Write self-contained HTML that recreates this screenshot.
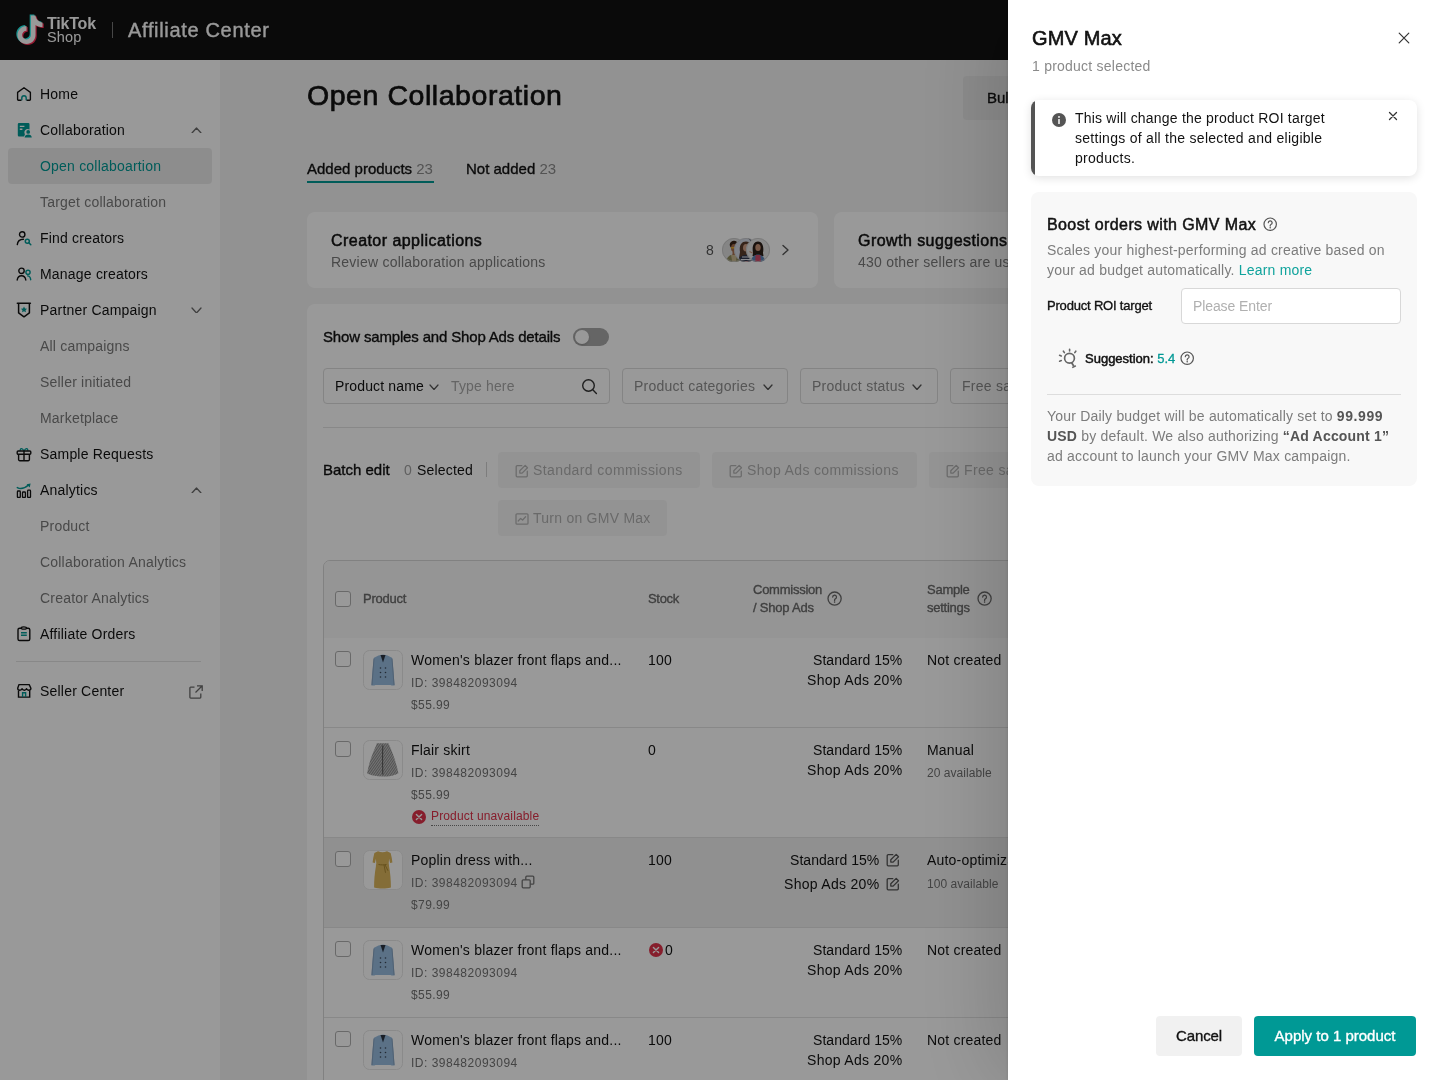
<!DOCTYPE html>
<html><head><meta charset="utf-8">
<style>
*{box-sizing:border-box;margin:0;padding:0}
html,body{width:1440px;height:1080px;overflow:hidden;font-family:"Liberation Sans",sans-serif;color:#121212;background:#f5f5f5;position:relative}
.abs{position:absolute}
.t{position:absolute;white-space:nowrap;will-change:transform}
.sb{-webkit-text-stroke:0.35px currentColor}
svg{display:block}
</style></head>
<body>

<div class="abs" style="left:0px;top:0px;width:1440px;height:60px;background:#121212;"></div>
<svg class="abs" style="left:14.5px;top:13px;" width="32" height="36" viewBox="0 0 32 36" fill="none">
<g transform="translate(1,1)">
<path d="M19.5 1.5 c0.6 4 3 6.5 7 7 v4.6 c-2.6 0 -5 -0.8 -7 -2.2 v10.2 c0 5 -4 9 -9 9 s-9 -4 -9 -9 s4 -9 9 -9 v4.6 c-2.4 0 -4.4 2 -4.4 4.4 s2 4.4 4.4 4.4 s4.4 -2 4.4 -4.4 V1.5z" fill="#25f4ee" transform="translate(-1.2,-1)"/>
<path d="M19.5 1.5 c0.6 4 3 6.5 7 7 v4.6 c-2.6 0 -5 -0.8 -7 -2.2 v10.2 c0 5 -4 9 -9 9 s-9 -4 -9 -9 s4 -9 9 -9 v4.6 c-2.4 0 -4.4 2 -4.4 4.4 s2 4.4 4.4 4.4 s4.4 -2 4.4 -4.4 V1.5z" fill="#fe2c55" transform="translate(1.2,1)"/>
<path d="M19.5 1.5 c0.6 4 3 6.5 7 7 v4.6 c-2.6 0 -5 -0.8 -7 -2.2 v10.2 c0 5 -4 9 -9 9 s-9 -4 -9 -9 s4 -9 9 -9 v4.6 c-2.4 0 -4.4 2 -4.4 4.4 s2 4.4 4.4 4.4 s4.4 -2 4.4 -4.4 V1.5z" fill="#fff"/>
</g></svg>
<div class="t " style="top:15.90px;font-size:16px;line-height:16px;color:#fff;font-weight:700;letter-spacing:-0.2px;left:47px;">TikTok</div>
<div class="t " style="top:30.18px;font-size:14.5px;line-height:14.5px;color:#fff;letter-spacing:0.15px;left:47px;">Shop</div>
<div class="abs" style="left:111.5px;top:22px;width:1.5px;height:16px;background:#777;"></div>
<div class="t sb" style="top:20.00px;font-size:20px;line-height:20px;color:#fff;letter-spacing:0.67px;left:128px;">Affiliate Center</div>
<div class="abs" style="left:0px;top:60px;width:220px;height:1020px;background:#fff;"></div>
<div class="abs" style="left:8px;top:148px;width:204px;height:36px;background:#ececec;border-radius:4px"></div>
<div class="t " style="top:87.10px;font-size:14px;line-height:14px;color:#121212;letter-spacing:0.2px;left:40px;">Home</div>
<div class="t " style="top:123.10px;font-size:14px;line-height:14px;color:#121212;letter-spacing:0.2px;left:40px;">Collaboration</div>
<div class="t " style="top:159.10px;font-size:14px;line-height:14px;color:#009995;letter-spacing:0.2px;left:40px;">Open collaboartion</div>
<div class="t " style="top:195.10px;font-size:14px;line-height:14px;color:#7a7a7a;letter-spacing:0.2px;left:40px;">Target collaboration</div>
<div class="t " style="top:231.10px;font-size:14px;line-height:14px;color:#121212;letter-spacing:0.2px;left:40px;">Find creators</div>
<div class="t " style="top:267.10px;font-size:14px;line-height:14px;color:#121212;letter-spacing:0.2px;left:40px;">Manage creators</div>
<div class="t " style="top:303.10px;font-size:14px;line-height:14px;color:#121212;letter-spacing:0.2px;left:40px;">Partner Campaign</div>
<div class="t " style="top:339.10px;font-size:14px;line-height:14px;color:#7a7a7a;letter-spacing:0.2px;left:40px;">All campaigns</div>
<div class="t " style="top:375.10px;font-size:14px;line-height:14px;color:#7a7a7a;letter-spacing:0.2px;left:40px;">Seller initiated</div>
<div class="t " style="top:411.10px;font-size:14px;line-height:14px;color:#7a7a7a;letter-spacing:0.2px;left:40px;">Marketplace</div>
<div class="t " style="top:447.10px;font-size:14px;line-height:14px;color:#121212;letter-spacing:0.2px;left:40px;">Sample Requests</div>
<div class="t " style="top:483.10px;font-size:14px;line-height:14px;color:#121212;letter-spacing:0.2px;left:40px;">Analytics</div>
<div class="t " style="top:519.10px;font-size:14px;line-height:14px;color:#7a7a7a;letter-spacing:0.2px;left:40px;">Product</div>
<div class="t " style="top:555.10px;font-size:14px;line-height:14px;color:#7a7a7a;letter-spacing:0.2px;left:40px;">Collaboration Analytics</div>
<div class="t " style="top:591.10px;font-size:14px;line-height:14px;color:#7a7a7a;letter-spacing:0.2px;left:40px;">Creator Analytics</div>
<div class="t " style="top:627.10px;font-size:14px;line-height:14px;color:#121212;letter-spacing:0.2px;left:40px;">Affiliate Orders</div>
<div class="t " style="top:684.10px;font-size:14px;line-height:14px;color:#121212;letter-spacing:0.2px;left:40px;">Seller Center</div>
<div class="abs" style="left:16px;top:661px;width:185px;height:1px;background:#e3e3e3;"></div>
<svg class="abs" style="left:16px;top:86px;" width="16" height="16" viewBox="0 0 16 16" fill="none"><path d="M5.5 14.2H2.4a.8.8 0 0 1-.8-.8V6.4L8 1.7l6.4 4.7v7a.8.8 0 0 1-.8.8h-3.1" stroke="#121212" stroke-width="1.35" stroke-linejoin="round"/><path d="M5.8 14.2v-2.3a2.2 2.2 0 0 1 4.4 0v2.3" stroke="#009995" stroke-width="1.4"/></svg>
<svg class="abs" style="left:16px;top:122px;" width="16" height="16" viewBox="0 0 16 16" fill="none"><path d="M3 1h9.3a1.2 1.2 0 0 1 1.2 1.2v5.2a3.6 3.6 0 0 0-4.6 5.3l-.9 1.8H3a1.2 1.2 0 0 1-1.2-1.2V2.2A1.2 1.2 0 0 1 3 1z" fill="#009995"/><path d="M3.8 4.4h4.6M3.8 7.3h2.6" stroke="#fff" stroke-width="1.4"/><circle cx="12.2" cy="9.9" r="1.9" fill="#009995"/><path d="M8.6 15.5c.2-1.9 1.6-3.1 3.6-3.1s3.4 1.2 3.6 3.1z" fill="#009995"/></svg>
<svg class="abs" style="left:16px;top:230px;" width="16" height="16" viewBox="0 0 16 16" fill="none"><circle cx="6.2" cy="4.4" r="2.7" stroke="#121212" stroke-width="1.4"/><path d="M1.3 14.6C1.6 11.3 3.8 9.4 7.4 9.3" stroke="#121212" stroke-width="1.4" stroke-linecap="round"/><circle cx="11.3" cy="11.3" r="2" stroke="#009995" stroke-width="1.5"/><path d="M12.8 12.8l2 2" stroke="#009995" stroke-width="1.5" stroke-linecap="round"/></svg>
<svg class="abs" style="left:16px;top:266px;" width="16" height="16" viewBox="0 0 16 16" fill="none"><circle cx="5.5" cy="4.8" r="2.7" stroke="#121212" stroke-width="1.4"/><path d="M1.2 14c.4-2.7 2-4.2 4.3-4.2s3.9 1.5 4.3 4.2" stroke="#121212" stroke-width="1.4" stroke-linecap="round"/><circle cx="12" cy="6.3" r="2.1" stroke="#009995" stroke-width="1.4"/><path d="M11.6 9.9c1.7.1 2.8 1.4 3.1 3.8" stroke="#009995" stroke-width="1.4" stroke-linecap="round"/></svg>
<svg class="abs" style="left:16px;top:302px;" width="16" height="16" viewBox="0 0 16 16" fill="none"><path d="M1.3 1.3h13.1" stroke="#121212" stroke-width="1.5" stroke-linecap="round"/><path d="M2.6 1.5v9.4L8 14.8l5.4-3.9V1.5" stroke="#121212" stroke-width="1.5" stroke-linejoin="round"/><path d="M8 4.6l1 2 2.1.2-1.6 1.4.5 2.1L8 9.2l-2 1.1.5-2.1L4.9 6.8 7 6.6z" fill="#009995"/></svg>
<svg class="abs" style="left:16px;top:446px;" width="16" height="16" viewBox="0 0 16 16" fill="none"><path d="M8 5C6.5 2 4 1.5 4.2 4.9M8 5c1.5-3 4-3.5 3.8-.1" stroke="#009995" stroke-width="1.3"/><rect x="1.2" y="5" width="13.6" height="3.2" rx="1" stroke="#121212" stroke-width="1.4"/><path d="M2.6 8.2v5.3a1.2 1.2 0 0 0 1.2 1.2h8.4a1.2 1.2 0 0 0 1.2-1.2V8.2M8 5v9.7" stroke="#121212" stroke-width="1.4"/></svg>
<svg class="abs" style="left:16px;top:482px;" width="16" height="16" viewBox="0 0 16 16" fill="none"><rect x="1.4" y="9" width="2.9" height="6.5" rx=".8" stroke="#121212" stroke-width="1.3"/><rect x="6.5" y="10" width="2.9" height="5.5" rx=".8" stroke="#121212" stroke-width="1.3"/><rect x="11.6" y="8.2" width="2.9" height="7.3" rx=".8" stroke="#121212" stroke-width="1.3"/><path d="M1.3 5.6c3.5 2 6.5 1.5 11.2-2.6" stroke="#009995" stroke-width="1.5" stroke-linecap="round"/><path d="M10.6 2.2l4-.8-.9 4z" fill="#009995"/></svg>
<svg class="abs" style="left:16px;top:626px;" width="16" height="16" viewBox="0 0 16 16" fill="none"><rect x="2" y="2.2" width="11.8" height="12.3" rx="1.6" stroke="#121212" stroke-width="1.4"/><ellipse cx="7.9" cy="2" rx="2.6" ry="1.2" fill="#fff" stroke="#121212" stroke-width="1.3"/><path d="M5 6.8h5.8M5 9.2h5.8" stroke="#009995" stroke-width="1.6"/></svg>
<svg class="abs" style="left:16px;top:683px;" width="16" height="16" viewBox="0 0 16 16" fill="none"><path d="M2.5 7.5v6.6h11.2V7.5" stroke="#121212" stroke-width="1.4"/><path d="M3 1.6h10.2l1.7 3.6c0 1.1-1 2-2.2 2-1.1 0-1.9-.7-2.2-1.6-.3.9-1.1 1.6-2.2 1.6s-1.9-.7-2.2-1.6c-.3.9-1.1 1.6-2.2 1.6-1.2 0-2.2-.9-2.2-2z" stroke="#121212" stroke-width="1.4" stroke-linejoin="round"/><path d="M6.6 14.1v-4.3h3v4.3" stroke="#009995" stroke-width="1.4"/></svg>
<svg class="abs" style="left:188px;top:684px;" width="16" height="16" viewBox="0 0 16 16" fill="none"><path d="M12.8 9.5v3.8a.8.8 0 0 1-.8.8H2.7a.8.8 0 0 1-.8-.8V4a.8.8 0 0 1 .8-.8h3.8" stroke="#6a6a6a" stroke-width="1.3"/><path d="M9 1.8h5.2V7M14 2L7.5 8.5" stroke="#6a6a6a" stroke-width="1.3"/></svg>
<svg class="abs" style="left:190.5px;top:126.75px;" width="11" height="6.5" viewBox="0 0 11 6.5" fill="none"><path d="M1 6.0L5.5 1l4.5 5.0" stroke="#6a6a6a" stroke-width="1.3" stroke-linecap="round" stroke-linejoin="round"/></svg>
<svg class="abs" style="left:190.5px;top:306.75px;" width="11" height="6.5" viewBox="0 0 11 6.5" fill="none"><path d="M1 1l4.5 5.0L10 1" stroke="#6a6a6a" stroke-width="1.3" stroke-linecap="round" stroke-linejoin="round"/></svg>
<svg class="abs" style="left:190.5px;top:486.75px;" width="11" height="6.5" viewBox="0 0 11 6.5" fill="none"><path d="M1 6.0L5.5 1l4.5 5.0" stroke="#6a6a6a" stroke-width="1.3" stroke-linecap="round" stroke-linejoin="round"/></svg>
<div class="abs" style="left:220px;top:60px;width:1220px;height:1020px;background:#f4f4f4;"></div>
<div class="t sb" style="top:80.78px;font-size:28.5px;line-height:28.5px;color:#121212;letter-spacing:0.55px;left:307px;-webkit-text-stroke-width:0.7px">Open Collaboration</div>
<div class="abs" style="left:963px;top:76px;width:120px;height:44px;background:#eaeaea;border-radius:4px"></div>
<div class="t sb" style="top:90.25px;font-size:15px;line-height:15px;color:#121212;letter-spacing:0px;left:987px;">Bulk add products</div>
<div class="t sb" style="top:160.55px;font-size:15px;line-height:15px;color:#121212;letter-spacing:0px;left:307px;">Added products <span style="color:#8a8a8a;-webkit-text-stroke:0">23</span></div>
<div class="abs" style="left:307px;top:181px;width:127px;height:2px;background:#009995;"></div>
<div class="t sb" style="top:160.55px;font-size:15px;line-height:15px;color:#121212;letter-spacing:0px;left:466px;">Not added <span style="color:#8a8a8a;-webkit-text-stroke:0">23</span></div>
<div class="abs" style="left:307px;top:212px;width:511px;height:76px;background:#fff;border-radius:8px"></div>
<div class="t sb" style="top:233.40px;font-size:16px;line-height:16px;color:#121212;letter-spacing:0.45px;left:331px;-webkit-text-stroke-width:0.5px">Creator applications</div>
<div class="t " style="top:255.10px;font-size:14px;line-height:14px;color:#7a7a7a;letter-spacing:0.23px;left:331px;">Review collaboration applications</div>
<div class="abs" style="left:834px;top:212px;width:600px;height:76px;background:#fff;border-radius:8px"></div>
<div class="t sb" style="top:233.40px;font-size:16px;line-height:16px;color:#121212;letter-spacing:0.45px;left:858px;-webkit-text-stroke-width:0.5px">Growth suggestions</div>
<div class="t " style="top:255.10px;font-size:14px;line-height:14px;color:#7a7a7a;letter-spacing:0.23px;left:858px;">430 other sellers are using this feature</div>
<div class="abs" style="left:307px;top:304px;width:1200px;height:900px;background:#fff;border-radius:8px"></div>
<div class="t sb" style="top:329.05px;font-size:15px;line-height:15px;color:#121212;letter-spacing:-0.16px;left:323px;">Show samples and Shop Ads details</div>
<div class="abs" style="left:573px;top:328px;width:36px;height:18px;background:#a8a8a8;border-radius:9px"></div>
<div class="abs" style="left:575px;top:330px;width:14px;height:14px;border-radius:7px;background:#fff;box-shadow:0 1px 2px rgba(0,0,0,.15)"></div>
<div class="abs" style="left:323px;top:368px;width:287px;height:36px;background:#fff;border:1px solid #dcdcdc;border-radius:4px;"></div>
<div class="t " style="top:379.10px;font-size:14px;line-height:14px;color:#121212;letter-spacing:0.15px;left:335px;">Product name</div>
<svg class="abs" style="left:429.0px;top:383.5px;" width="10" height="6" viewBox="0 0 10 6" fill="none"><path d="M1 1l4.0 4.5L9 1" stroke="#555" stroke-width="1.2" stroke-linecap="round" stroke-linejoin="round"/></svg>
<div class="t " style="top:379.10px;font-size:14px;line-height:14px;color:#a8a8a8;letter-spacing:0.15px;left:451px;">Type here</div>
<svg class="abs" style="left:581px;top:378px;" width="17" height="17" viewBox="0 0 17 17" fill="none"><circle cx="7.5" cy="7.5" r="5.8" stroke="#333" stroke-width="1.4"/><path d="M11.8 11.8l3.6 3.6" stroke="#333" stroke-width="1.4" stroke-linecap="round"/></svg>
<div class="abs" style="left:622px;top:368px;width:166px;height:36px;background:#fff;border:1px solid #dcdcdc;border-radius:4px;"></div>
<div class="t " style="top:379.10px;font-size:14px;line-height:14px;color:#8f8f8f;letter-spacing:0.25px;left:634px;">Product categories</div>
<svg class="abs" style="left:763.0px;top:383.5px;" width="10" height="6" viewBox="0 0 10 6" fill="none"><path d="M1 1l4.0 4.5L9 1" stroke="#555" stroke-width="1.3" stroke-linecap="round" stroke-linejoin="round"/></svg>
<div class="abs" style="left:800px;top:368px;width:138px;height:36px;background:#fff;border:1px solid #dcdcdc;border-radius:4px;"></div>
<div class="t " style="top:379.10px;font-size:14px;line-height:14px;color:#8f8f8f;letter-spacing:0.25px;left:812px;">Product status</div>
<svg class="abs" style="left:912.0px;top:383.5px;" width="10" height="6" viewBox="0 0 10 6" fill="none"><path d="M1 1l4.0 4.5L9 1" stroke="#555" stroke-width="1.3" stroke-linecap="round" stroke-linejoin="round"/></svg>
<div class="abs" style="left:950px;top:368px;width:160px;height:36px;background:#fff;border:1px solid #dcdcdc;border-radius:4px;"></div>
<div class="t " style="top:379.10px;font-size:14px;line-height:14px;color:#8f8f8f;letter-spacing:0.25px;left:962px;">Free samples</div>
<div class="abs" style="left:323px;top:427px;width:1030px;height:1px;background:#e3e3e3;"></div>
<div class="t sb" style="top:462.05px;font-size:15px;line-height:15px;color:#121212;letter-spacing:0px;left:323px;">Batch edit</div>
<div class="t " style="top:462.90px;font-size:14px;line-height:14px;color:#a0a0a0;left:404px;">0</div>
<div class="t " style="top:462.90px;font-size:14px;line-height:14px;color:#121212;letter-spacing:0.2px;left:417px;">Selected</div>
<div class="abs" style="left:486px;top:462px;width:1px;height:15px;background:#d0d0d0;"></div>
<div class="abs" style="left:498px;top:452px;width:202px;height:36px;background:#f6f6f6;border-radius:4px"></div>
<svg class="abs" style="left:515px;top:463.5px;" width="14" height="14" viewBox="0 0 14 14" fill="none"><path d="M12.3 7.2v4.6a1 1 0 0 1-1 1H2.2a1 1 0 0 1-1-1V2.7a1 1 0 0 1 1-1h4.6" stroke="#b4b4b4" stroke-width="1.3" stroke-linecap="round"/><path d="M10.2 1.4l2.3 2.3-5.4 5.4H4.8V6.8z" stroke="#b4b4b4" stroke-width="1.3" stroke-linejoin="round"/></svg>
<div class="t " style="top:463.10px;font-size:14px;line-height:14px;color:#b0b0b0;letter-spacing:0.4px;left:533px;">Standard commissions</div>
<div class="abs" style="left:712px;top:452px;width:205px;height:36px;background:#f6f6f6;border-radius:4px"></div>
<svg class="abs" style="left:729px;top:463.5px;" width="14" height="14" viewBox="0 0 14 14" fill="none"><path d="M12.3 7.2v4.6a1 1 0 0 1-1 1H2.2a1 1 0 0 1-1-1V2.7a1 1 0 0 1 1-1h4.6" stroke="#b4b4b4" stroke-width="1.3" stroke-linecap="round"/><path d="M10.2 1.4l2.3 2.3-5.4 5.4H4.8V6.8z" stroke="#b4b4b4" stroke-width="1.3" stroke-linejoin="round"/></svg>
<div class="t " style="top:463.10px;font-size:14px;line-height:14px;color:#b0b0b0;letter-spacing:0.35px;left:747px;">Shop Ads commissions</div>
<div class="abs" style="left:929px;top:452px;width:200px;height:36px;background:#f6f6f6;border-radius:4px"></div>
<svg class="abs" style="left:946px;top:463.5px;" width="14" height="14" viewBox="0 0 14 14" fill="none"><path d="M12.3 7.2v4.6a1 1 0 0 1-1 1H2.2a1 1 0 0 1-1-1V2.7a1 1 0 0 1 1-1h4.6" stroke="#b4b4b4" stroke-width="1.3" stroke-linecap="round"/><path d="M10.2 1.4l2.3 2.3-5.4 5.4H4.8V6.8z" stroke="#b4b4b4" stroke-width="1.3" stroke-linejoin="round"/></svg>
<div class="t " style="top:463.10px;font-size:14px;line-height:14px;color:#b0b0b0;letter-spacing:0.35px;left:964px;">Free samples</div>
<div class="abs" style="left:498px;top:500px;width:169px;height:36px;background:#f6f6f6;border-radius:4px"></div>
<svg class="abs" style="left:515px;top:511.5px;" width="14" height="14" viewBox="0 0 14 14" fill="none"><rect x="1" y="1.8" width="12" height="10.4" rx="1" stroke="#b4b4b4" stroke-width="1.3"/><path d="M3.2 9l2.4-2.6 2 1.6 3-3.2" stroke="#b4b4b4" stroke-width="1.3" stroke-linecap="round" stroke-linejoin="round"/></svg>
<div class="t " style="top:511.10px;font-size:14px;line-height:14px;color:#b0b0b0;letter-spacing:0.25px;left:533px;">Turn on GMV Max</div>
<div class="abs" style="left:323px;top:560px;width:1030px;height:560px;border:1px solid #d8d8d8;border-radius:7px;overflow:hidden;background:#fff"><div style="position:absolute;left:0;top:0;width:100%;height:77px;background:#f8f8f8"></div><div style="position:absolute;left:0;top:276px;width:100%;height:90px;background:#f1f1f1"></div></div>
<div class="abs" style="left:324px;top:727px;width:1028px;height:1px;background:#e3e3e3;"></div>
<div class="abs" style="left:324px;top:837px;width:1028px;height:1px;background:#e3e3e3;"></div>
<div class="abs" style="left:324px;top:927px;width:1028px;height:1px;background:#e3e3e3;"></div>
<div class="abs" style="left:324px;top:1017px;width:1028px;height:1px;background:#e3e3e3;"></div>
<div class="abs" style="left:335px;top:591px;width:16px;height:16px;background:#fff;border:1.2px solid #b0b0b0;border-radius:3px"></div>
<div class="t sb" style="top:592.45px;font-size:13px;line-height:13px;color:#6a6a6a;letter-spacing:-0.25px;left:363px;">Product</div>
<div class="t sb" style="top:592.45px;font-size:13px;line-height:13px;color:#6a6a6a;letter-spacing:-0.3px;left:648px;">Stock</div>
<div class="t sb" style="top:582.95px;font-size:13px;line-height:13px;color:#6a6a6a;letter-spacing:-0.25px;left:753px;">Commission</div>
<div class="t sb" style="top:600.95px;font-size:13px;line-height:13px;color:#6a6a6a;letter-spacing:-0.2px;left:753px;">/ Shop Ads</div>
<svg class="abs" style="left:827.4px;top:591.4px;" width="15.2" height="15.2" viewBox="0 0 15.2 15.2" fill="none"><circle cx="7.6" cy="7.6" r="6.6" stroke="#6a6a6a" stroke-width="1.3"/><path d="M5.699999999999999 6.1a1.9 1.9 0 1 1 2.6 1.8c-.5.2-.7.6-.7 1.1v.5" stroke="#6a6a6a" stroke-width="1.3" stroke-linecap="round"/><circle cx="7.6" cy="11.1" r=".8" fill="#6a6a6a"/></svg>
<div class="t sb" style="top:582.95px;font-size:13px;line-height:13px;color:#6a6a6a;letter-spacing:-0.25px;left:927px;">Sample</div>
<div class="t sb" style="top:600.95px;font-size:13px;line-height:13px;color:#6a6a6a;letter-spacing:-0.25px;left:927px;">settings</div>
<svg class="abs" style="left:977.4px;top:591.4px;" width="15.2" height="15.2" viewBox="0 0 15.2 15.2" fill="none"><circle cx="7.6" cy="7.6" r="6.6" stroke="#6a6a6a" stroke-width="1.3"/><path d="M5.699999999999999 6.1a1.9 1.9 0 1 1 2.6 1.8c-.5.2-.7.6-.7 1.1v.5" stroke="#6a6a6a" stroke-width="1.3" stroke-linecap="round"/><circle cx="7.6" cy="11.1" r=".8" fill="#6a6a6a"/></svg>
<div class="abs" style="left:335px;top:651px;width:16px;height:16px;background:#fff;border:1.2px solid #b0b0b0;border-radius:3px"></div>
<svg class="abs" style="left:363px;top:650px;" width="40" height="40" viewBox="0 0 40 40" fill="none"><rect x="0.5" y="0.5" width="39" height="39" rx="6" fill="#fff" stroke="#e6e6e6"/><path d="M15.5 5.5l4.5-1 4.5 1 4.5 2.2c.8 5 1.6 14 2.6 27.8h-3l-1-.6H12.4l-1 .6h-3c1-13.8 1.8-22.8 2.6-27.8z" fill="#98bde0"/><path d="M17.5 5l2.5 7.5 2.5-7.5z" fill="#2a3340"/><circle cx="17.5" cy="18" r=".8" fill="#3a4656"/><circle cx="22.5" cy="18" r=".8" fill="#3a4656"/><circle cx="17.5" cy="22.5" r=".8" fill="#3a4656"/><circle cx="22.5" cy="22.5" r=".8" fill="#3a4656"/><circle cx="17.5" cy="27" r=".8" fill="#3a4656"/><circle cx="22.5" cy="27" r=".8" fill="#3a4656"/><path d="M11 8.5l-2 26.5M29 8.5l2 26.5" stroke="#86a2c0" stroke-width="1"/></svg>
<div class="t " style="top:653.10px;font-size:14px;line-height:14px;color:#121212;letter-spacing:0.2px;left:411px;">Women's blazer front flaps and...</div>
<div class="t " style="top:676.80px;font-size:12px;line-height:12px;color:#727272;letter-spacing:0.5px;left:411px;">ID: 398482093094</div>
<div class="t " style="top:698.80px;font-size:12px;line-height:12px;color:#727272;letter-spacing:0.4px;left:411px;">$55.99</div>
<div class="t " style="top:653.10px;font-size:14px;line-height:14px;color:#121212;letter-spacing:0.2px;left:648px;">100</div>
<div class="t " style="top:653.10px;font-size:14px;line-height:14px;color:#121212;letter-spacing:0.05px;right:538px;text-align:right;">Standard 15%</div>
<div class="t " style="top:673.10px;font-size:14px;line-height:14px;color:#121212;letter-spacing:0.3px;right:538px;text-align:right;">Shop Ads 20%</div>
<div class="t " style="top:653.10px;font-size:14px;line-height:14px;color:#121212;letter-spacing:0.2px;left:927px;">Not created</div>
<div class="abs" style="left:335px;top:741px;width:16px;height:16px;background:#fff;border:1.2px solid #b0b0b0;border-radius:3px"></div>
<svg class="abs" style="left:363px;top:740px;" width="40" height="40" viewBox="0 0 40 40" fill="none"><defs><pattern id="sk" width="2" height="2" patternUnits="userSpaceOnUse" patternTransform="rotate(35)"><rect width="2" height="2" fill="#c4c4c4"/><rect width="1" height="2" fill="#8a8a8a"/></pattern></defs><rect x="0.5" y="0.5" width="39" height="39" rx="6" fill="#fff" stroke="#e6e6e6"/><path d="M13.8 3.2h11.6l1 2.2c3.5 8 6.8 17 9 27.8-2 1.3-4 2-6.5 2.6-3.5.8-6.5.8-9.5.8s-6-.3-9-1c-2.5-.6-4.5-1.4-6.3-2.4 2-11 5.5-20 9-27.8z" fill="url(#sk)"/><path d="M19.8 5.5c-.3 10-.3 20 0 29" stroke="#555" stroke-width="1"/></svg>
<div class="t " style="top:743.10px;font-size:14px;line-height:14px;color:#121212;letter-spacing:0.2px;left:411px;">Flair skirt</div>
<div class="t " style="top:766.80px;font-size:12px;line-height:12px;color:#727272;letter-spacing:0.5px;left:411px;">ID: 398482093094</div>
<div class="t " style="top:788.80px;font-size:12px;line-height:12px;color:#727272;letter-spacing:0.4px;left:411px;">$55.99</div>
<svg class="abs" style="left:412px;top:810px;" width="14" height="14" viewBox="0 0 14 14" fill="none"><circle cx="7" cy="7" r="7" fill="#e0324a"/><path d="M4.4 4.4l5.2 5.2M9.6 4.4l-5.2 5.2" stroke="#fff" stroke-width="1.4" stroke-linecap="round"/></svg>
<div class="t " style="top:810.30px;font-size:12px;line-height:12px;color:#e0324a;letter-spacing:0.15px;left:431px;">Product unavailable</div>
<div class="abs" style="left:431px;top:825px;width:108px;height:0px;background:transparent;border-top:1px dotted #777"></div>
<div class="t " style="top:743.10px;font-size:14px;line-height:14px;color:#121212;letter-spacing:0.2px;left:648px;">0</div>
<div class="t " style="top:743.10px;font-size:14px;line-height:14px;color:#121212;letter-spacing:0.05px;right:538px;text-align:right;">Standard 15%</div>
<div class="t " style="top:763.10px;font-size:14px;line-height:14px;color:#121212;letter-spacing:0.3px;right:538px;text-align:right;">Shop Ads 20%</div>
<div class="t " style="top:743.10px;font-size:14px;line-height:14px;color:#121212;letter-spacing:0.2px;left:927px;">Manual</div>
<div class="t " style="top:766.80px;font-size:12px;line-height:12px;color:#727272;letter-spacing:0.05px;left:927px;">20 available</div>
<div class="abs" style="left:335px;top:851px;width:16px;height:16px;background:#fff;border:1.2px solid #b0b0b0;border-radius:3px"></div>
<svg class="abs" style="left:363px;top:850px;" width="40" height="40" viewBox="0 0 40 40" fill="none"><rect x="0.5" y="0.5" width="39" height="39" rx="6" fill="#fff" stroke="#e6e6e6"/><path d="M15 1.3c1.5.7 3 1 4.5 1s3-.3 4.5-1l3.6 1.6c.9 3 1.5 6.3 1.8 9.6l-2.3.6-1-4.3-.4 4.8c.3 1 .4 2 .4 3 1.2 6.5 1.8 13.5 1.8 21-2.6.8-5.2 1-8.4 1s-5.8-.2-8.4-1c0-7.5.6-14.5 1.8-21 0-1 .1-2 .4-3l-.4-4.8-1 4.3-2.3-.6c.3-3.3.9-6.6 1.8-9.6z" fill="#dcb65c"/><path d="M15.5 14.5c2.5.5 5.5.5 8 0" stroke="#a88530" stroke-width="1"/><path d="M21 14.8l1.5 8M22 14.8l3 6" stroke="#a88530" stroke-width=".9"/></svg>
<div class="t " style="top:853.10px;font-size:14px;line-height:14px;color:#121212;letter-spacing:0.2px;left:411px;">Poplin dress with...</div>
<div class="t " style="top:876.80px;font-size:12px;line-height:12px;color:#727272;letter-spacing:0.5px;left:411px;">ID: 398482093094</div>
<div class="t " style="top:898.80px;font-size:12px;line-height:12px;color:#727272;letter-spacing:0.4px;left:411px;">$79.99</div>
<svg class="abs" style="left:521px;top:875px;" width="14" height="14" viewBox="0 0 14 14" fill="none"><rect x="1.2" y="4.8" width="8" height="8" rx="1" stroke="#727272" stroke-width="1.3"/><path d="M4.8 4.8V2.2a1 1 0 0 1 1-1h6a1 1 0 0 1 1 1v6a1 1 0 0 1-1 1H9.2" stroke="#727272" stroke-width="1.3"/></svg>
<div class="t " style="top:853.10px;font-size:14px;line-height:14px;color:#121212;letter-spacing:0.2px;left:648px;">100</div>
<div class="t " style="top:853.10px;font-size:14px;line-height:14px;color:#121212;letter-spacing:0.05px;right:561px;text-align:right;">Standard 15%</div>
<div class="t " style="top:877.10px;font-size:14px;line-height:14px;color:#121212;letter-spacing:0.3px;right:561px;text-align:right;">Shop Ads 20%</div>
<svg class="abs" style="left:886px;top:853px;" width="14" height="14" viewBox="0 0 14 14" fill="none"><path d="M12.3 7.2v4.6a1 1 0 0 1-1 1H2.2a1 1 0 0 1-1-1V2.7a1 1 0 0 1 1-1h4.6" stroke="#555" stroke-width="1.3" stroke-linecap="round"/><path d="M10.2 1.4l2.3 2.3-5.4 5.4H4.8V6.8z" stroke="#555" stroke-width="1.3" stroke-linejoin="round"/></svg>
<svg class="abs" style="left:886px;top:877px;" width="14" height="14" viewBox="0 0 14 14" fill="none"><path d="M12.3 7.2v4.6a1 1 0 0 1-1 1H2.2a1 1 0 0 1-1-1V2.7a1 1 0 0 1 1-1h4.6" stroke="#555" stroke-width="1.3" stroke-linecap="round"/><path d="M10.2 1.4l2.3 2.3-5.4 5.4H4.8V6.8z" stroke="#555" stroke-width="1.3" stroke-linejoin="round"/></svg>
<div class="t " style="top:853.10px;font-size:14px;line-height:14px;color:#121212;letter-spacing:0.2px;left:927px;">Auto-optimization</div>
<div class="t " style="top:877.80px;font-size:12px;line-height:12px;color:#727272;letter-spacing:0.05px;left:927px;">100 available</div>
<div class="abs" style="left:335px;top:941px;width:16px;height:16px;background:#fff;border:1.2px solid #b0b0b0;border-radius:3px"></div>
<svg class="abs" style="left:363px;top:940px;" width="40" height="40" viewBox="0 0 40 40" fill="none"><rect x="0.5" y="0.5" width="39" height="39" rx="6" fill="#fff" stroke="#e6e6e6"/><path d="M15.5 5.5l4.5-1 4.5 1 4.5 2.2c.8 5 1.6 14 2.6 27.8h-3l-1-.6H12.4l-1 .6h-3c1-13.8 1.8-22.8 2.6-27.8z" fill="#98bde0"/><path d="M17.5 5l2.5 7.5 2.5-7.5z" fill="#2a3340"/><circle cx="17.5" cy="18" r=".8" fill="#3a4656"/><circle cx="22.5" cy="18" r=".8" fill="#3a4656"/><circle cx="17.5" cy="22.5" r=".8" fill="#3a4656"/><circle cx="22.5" cy="22.5" r=".8" fill="#3a4656"/><circle cx="17.5" cy="27" r=".8" fill="#3a4656"/><circle cx="22.5" cy="27" r=".8" fill="#3a4656"/><path d="M11 8.5l-2 26.5M29 8.5l2 26.5" stroke="#86a2c0" stroke-width="1"/></svg>
<div class="t " style="top:943.10px;font-size:14px;line-height:14px;color:#121212;letter-spacing:0.2px;left:411px;">Women's blazer front flaps and...</div>
<div class="t " style="top:966.80px;font-size:12px;line-height:12px;color:#727272;letter-spacing:0.5px;left:411px;">ID: 398482093094</div>
<div class="t " style="top:988.80px;font-size:12px;line-height:12px;color:#727272;letter-spacing:0.4px;left:411px;">$55.99</div>
<svg class="abs" style="left:649px;top:943px;" width="14" height="14" viewBox="0 0 14 14" fill="none"><circle cx="7" cy="7" r="7" fill="#e0324a"/><path d="M4.4 4.4l5.2 5.2M9.6 4.4l-5.2 5.2" stroke="#fff" stroke-width="1.4" stroke-linecap="round"/></svg>
<div class="t " style="top:943.10px;font-size:14px;line-height:14px;color:#121212;left:665px;">0</div>
<div class="t " style="top:943.10px;font-size:14px;line-height:14px;color:#121212;letter-spacing:0.05px;right:538px;text-align:right;">Standard 15%</div>
<div class="t " style="top:963.10px;font-size:14px;line-height:14px;color:#121212;letter-spacing:0.3px;right:538px;text-align:right;">Shop Ads 20%</div>
<div class="t " style="top:943.10px;font-size:14px;line-height:14px;color:#121212;letter-spacing:0.2px;left:927px;">Not created</div>
<div class="abs" style="left:335px;top:1031px;width:16px;height:16px;background:#fff;border:1.2px solid #b0b0b0;border-radius:3px"></div>
<svg class="abs" style="left:363px;top:1030px;" width="40" height="40" viewBox="0 0 40 40" fill="none"><rect x="0.5" y="0.5" width="39" height="39" rx="6" fill="#fff" stroke="#e6e6e6"/><path d="M15.5 5.5l4.5-1 4.5 1 4.5 2.2c.8 5 1.6 14 2.6 27.8h-3l-1-.6H12.4l-1 .6h-3c1-13.8 1.8-22.8 2.6-27.8z" fill="#98bde0"/><path d="M17.5 5l2.5 7.5 2.5-7.5z" fill="#2a3340"/><circle cx="17.5" cy="18" r=".8" fill="#3a4656"/><circle cx="22.5" cy="18" r=".8" fill="#3a4656"/><circle cx="17.5" cy="22.5" r=".8" fill="#3a4656"/><circle cx="22.5" cy="22.5" r=".8" fill="#3a4656"/><circle cx="17.5" cy="27" r=".8" fill="#3a4656"/><circle cx="22.5" cy="27" r=".8" fill="#3a4656"/><path d="M11 8.5l-2 26.5M29 8.5l2 26.5" stroke="#86a2c0" stroke-width="1"/></svg>
<div class="t " style="top:1033.10px;font-size:14px;line-height:14px;color:#121212;letter-spacing:0.2px;left:411px;">Women's blazer front flaps and...</div>
<div class="t " style="top:1056.80px;font-size:12px;line-height:12px;color:#727272;letter-spacing:0.5px;left:411px;">ID: 398482093094</div>
<div class="t " style="top:1078.80px;font-size:12px;line-height:12px;color:#727272;letter-spacing:0.4px;left:411px;">$55.99</div>
<div class="t " style="top:1033.10px;font-size:14px;line-height:14px;color:#121212;letter-spacing:0.2px;left:648px;">100</div>
<div class="t " style="top:1033.10px;font-size:14px;line-height:14px;color:#121212;letter-spacing:0.05px;right:538px;text-align:right;">Standard 15%</div>
<div class="t " style="top:1053.10px;font-size:14px;line-height:14px;color:#121212;letter-spacing:0.3px;right:538px;text-align:right;">Shop Ads 20%</div>
<div class="t " style="top:1033.10px;font-size:14px;line-height:14px;color:#121212;letter-spacing:0.2px;left:927px;">Not created</div>
<div class="t " style="top:242.60px;font-size:14px;line-height:14px;color:#555;left:706px;">8</div>
<svg class="abs" style="left:722px;top:238px;" width="24" height="24" viewBox="0 0 24 24" fill="none"><defs><clipPath id="av722"><circle cx="12" cy="12" r="12"/></clipPath></defs><g clip-path="url(#av722)"><rect width="24" height="24" fill="#dedede"/><path d="M4 26c0-6 3-9.5 8-9.5s8 3.5 8 9.5z" fill="#8e8a5c"/><path d="M9 17l1.5 8h3l1.5-8z" fill="#c8b890"/><ellipse cx="12" cy="6.8" rx="4.3" ry="4" fill="#3a2418"/><ellipse cx="12" cy="10" rx="3" ry="4" fill="#a87050"/><rect x="9" y="9" width="6" height="1.6" rx=".8" fill="#e8b030"/><path d="M10.5 13.5h3v3.5h-3z" fill="#a87050"/></g><circle cx="12" cy="12" r="11.6" stroke="#c4c4c4" stroke-width=".8" fill="none"/></svg>
<svg class="abs" style="left:734px;top:238px;" width="24" height="24" viewBox="0 0 24 24" fill="none"><defs><clipPath id="av734"><circle cx="12" cy="12" r="12"/></clipPath></defs><g clip-path="url(#av734)"><rect width="24" height="24" fill="#d6dae6"/><path d="M14 0l10 6v6z" fill="#30364c"/><path d="M6 14c-1-6 1-10.5 6-10.5s7 4.5 6 10.5l1 6H5z" fill="#5a3c2c"/><ellipse cx="12" cy="9.8" rx="3" ry="3.8" fill="#d0a088"/><path d="M3.5 26c.5-6 3.5-9 8.5-9s8 3 8.5 9z" fill="#30364c"/><path d="M8 19h8M7 21.5h10" stroke="#e8e8f0" stroke-width="1"/><path d="M11 23h3l.5 3h-4z" fill="#d04050"/></g><circle cx="12" cy="12" r="11.6" stroke="#c4c4c4" stroke-width=".8" fill="none"/></svg>
<svg class="abs" style="left:746px;top:238px;" width="24" height="24" viewBox="0 0 24 24" fill="none"><defs><clipPath id="av746"><circle cx="12" cy="12" r="12"/></clipPath></defs><g clip-path="url(#av746)"><rect width="24" height="24" fill="#e6e6e6"/><path d="M7 15c-1.2-7 .8-11.5 5-11.5s6.2 4.5 5 11.5l.5 3h-11z" fill="#2c1e18"/><ellipse cx="12" cy="9.5" rx="2.7" ry="3.6" fill="#c89478"/><path d="M4.5 26c.3-6 3-9.5 7.5-9.5s7.2 3.5 7.5 9.5z" fill="#5d86b8"/><path d="M9.6 17h4.8l.6 9H9z" fill="#d04a6a"/><path d="M3.5 13.5l3 1.5" stroke="#c89478" stroke-width="1.2"/></g><circle cx="12" cy="12" r="11.6" stroke="#c4c4c4" stroke-width=".8" fill="none"/></svg>
<svg class="abs" style="left:781px;top:244px;" width="10" height="12" viewBox="0 0 10 12" fill="none"><path d="M2 1.5l5 4.5-5 4.5" stroke="#555" stroke-width="1.4" stroke-linecap="round" stroke-linejoin="round"/></svg>
<div class="abs" style="left:0;top:0;width:1440px;height:1080px;background:rgba(0,0,0,0.4)"></div>
<div class="abs" style="left:1008px;top:0px;width:432px;height:1080px;background:#fff;box-shadow:-12px 0 80px rgba(0,0,0,0.18),-1px 0 3px rgba(0,0,0,0.08)"></div>
<div class="t sb" style="top:28.00px;font-size:20px;line-height:20px;color:#121212;letter-spacing:0.15px;left:1032px;-webkit-text-stroke-width:0.6px">GMV Max</div>
<div class="t " style="top:59.10px;font-size:14px;line-height:14px;color:#8a8a8a;letter-spacing:0.23px;left:1032px;">1 product selected</div>
<svg class="abs" style="left:1398px;top:32px;" width="12" height="12" viewBox="0 0 12 12" fill="none"><path d="M1.2 1.2l9.6 9.6M10.8 1.2L1.2 10.8" stroke="#333" stroke-width="1.2" stroke-linecap="round"/></svg>
<div class="abs" style="left:1031px;top:100px;width:386px;height:76px;background:#fff;border-radius:8px;box-shadow:0 2px 10px rgba(0,0,0,.12);overflow:hidden"><div style="position:absolute;left:0;top:0;width:4px;height:100%;background:#545454"></div></div>
<svg class="abs" style="left:1052px;top:113px;" width="14" height="14" viewBox="0 0 14 14" fill="none"><circle cx="7" cy="7" r="7" fill="#555"/><rect x="6.25" y="6" width="1.5" height="5" rx=".5" fill="#fff"/><circle cx="7" cy="3.9" r=".95" fill="#fff"/></svg>
<div class="t " style="top:110.60px;font-size:14px;line-height:14px;color:#121212;letter-spacing:0.2px;left:1075px;">This will change the product ROI target</div>
<div class="t " style="top:130.60px;font-size:14px;line-height:14px;color:#121212;letter-spacing:0.28px;left:1075px;">settings of all the selected and eligible</div>
<div class="t " style="top:150.60px;font-size:14px;line-height:14px;color:#121212;letter-spacing:0.28px;left:1075px;">products.</div>
<svg class="abs" style="left:1388px;top:111px;" width="10" height="10" viewBox="0 0 10 10" fill="none"><path d="M1.5 1.5l7 7M8.5 1.5l-7 7" stroke="#333" stroke-width="1.3" stroke-linecap="round"/></svg>
<div class="abs" style="left:1031px;top:192px;width:386px;height:294px;background:#f8f8f8;border-radius:8px"></div>
<div class="t sb" style="top:217.40px;font-size:16px;line-height:16px;color:#121212;letter-spacing:0.4px;left:1047px;-webkit-text-stroke-width:0.5px">Boost orders with GMV Max</div>
<svg class="abs" style="left:1262.8px;top:216.8px;" width="14.4" height="14.4" viewBox="0 0 14.4 14.4" fill="none"><circle cx="7.2" cy="7.2" r="6.2" stroke="#555" stroke-width="1.2"/><path d="M5.300000000000001 5.7a1.9 1.9 0 1 1 2.6 1.8c-.5.2-.7.6-.7 1.1v.5" stroke="#555" stroke-width="1.2" stroke-linecap="round"/><circle cx="7.2" cy="10.7" r=".8" fill="#555"/></svg>
<div class="t " style="top:243.10px;font-size:14px;line-height:14px;color:#7c7c7c;letter-spacing:0.2px;left:1047px;">Scales your highest-performing ad creative based on</div>
<div class="t " style="top:263.10px;font-size:14px;line-height:14px;color:#7c7c7c;letter-spacing:0.2px;left:1047px;">your ad budget automatically. <span style="color:#0fa39c">Learn more</span></div>
<div class="t sb" style="top:298.95px;font-size:13px;line-height:13px;color:#121212;letter-spacing:-0.19px;left:1047px;">Product ROI target</div>
<div class="abs" style="left:1181px;top:288px;width:220px;height:36px;background:#fff;border:1px solid #d8d8d8;border-radius:4px"></div>
<div class="t " style="top:299.10px;font-size:14px;line-height:14px;color:#b0b0b0;letter-spacing:-0.1px;left:1193px;">Please Enter</div>
<svg class="abs" style="left:1056px;top:346px;" width="26" height="26" viewBox="0 0 26 26" fill="none"><circle cx="13.5" cy="12.3" r="4.9" stroke="#666" stroke-width="1.7"/><path d="M15.5 16.6l2.2 3.3" stroke="#666" stroke-width="1.8"/><path d="M16.2 21.6l3.6-1.9" stroke="#666" stroke-width="1.6"/><path d="M13.6 3.2v1.8M7.4 5.2l1 1.4M19.8 5.2l-1 1.4M3.6 9.3l1.7.6M3.6 15.2l1.7-.6" stroke="#666" stroke-width="1.6" stroke-linecap="round"/></svg>
<div class="t sb" style="top:351.95px;font-size:13px;line-height:13px;color:#121212;letter-spacing:0px;left:1085px;-webkit-text-stroke-width:0.5px">Suggestion: <span style="color:#009995;-webkit-text-stroke:0.3px #009995">5.4</span></div>
<svg class="abs" style="left:1179.8px;top:350.8px;" width="14.4" height="14.4" viewBox="0 0 14.4 14.4" fill="none"><circle cx="7.2" cy="7.2" r="6.2" stroke="#555" stroke-width="1.2"/><path d="M5.300000000000001 5.7a1.9 1.9 0 1 1 2.6 1.8c-.5.2-.7.6-.7 1.1v.5" stroke="#555" stroke-width="1.2" stroke-linecap="round"/><circle cx="7.2" cy="10.7" r=".8" fill="#555"/></svg>
<div class="abs" style="left:1047px;top:394px;width:354px;height:1px;background:#dddddd;"></div>
<div class="t " style="top:408.60px;font-size:14px;line-height:14px;color:#7c7c7c;letter-spacing:0.2px;left:1047px;">Your Daily budget will be automatically set to <b style="color:#555;letter-spacing:0.6px">99.999</b></div>
<div class="t " style="top:428.60px;font-size:14px;line-height:14px;color:#7c7c7c;letter-spacing:0.2px;left:1047px;"><b style="color:#555">USD</b> by default. We also authorizing <b style="color:#555">&ldquo;Ad Account 1&rdquo;</b></div>
<div class="t " style="top:448.60px;font-size:14px;line-height:14px;color:#7c7c7c;letter-spacing:0.2px;left:1047px;">ad account to launch your GMV Max campaign.</div>
<div class="abs" style="left:1156px;top:1016px;width:86px;height:40px;background:#f1f1f1;border-radius:4px"></div>
<div class="t sb" style="top:1028.25px;font-size:15px;line-height:15px;color:#121212;letter-spacing:-0.1px;left:1199px;left:1156px;width:86px;text-align:center">Cancel</div>
<div class="abs" style="left:1254px;top:1016px;width:162px;height:40px;background:#009995;border-radius:4px"></div>
<div class="t sb" style="top:1028.25px;font-size:15px;line-height:15px;color:#fff;letter-spacing:0px;left:1335px;left:1254px;width:162px;text-align:center">Apply to 1 product</div>
</body></html>
